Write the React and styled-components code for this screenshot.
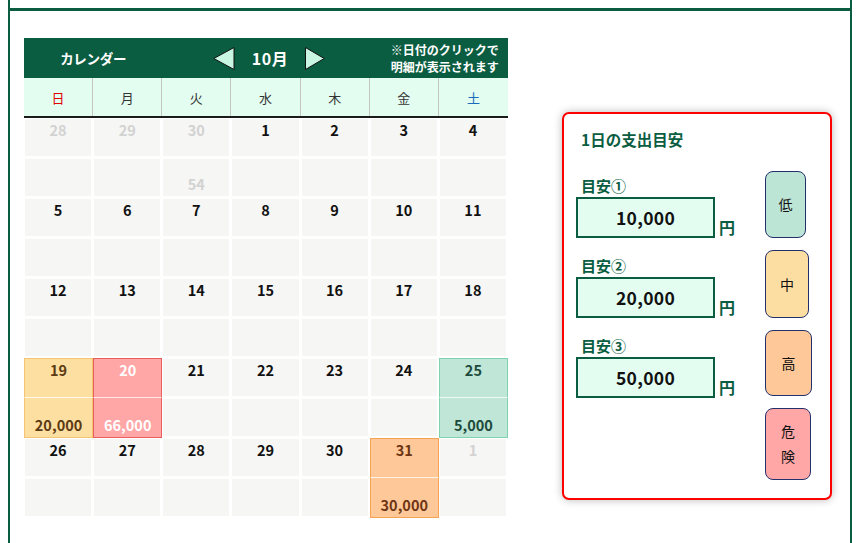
import React from "react";
import styled, { createGlobalStyle } from "styled-components";

const GREEN = "#0b5d41";
const MINT = "#e3fdf1";

const GlobalStyle = createGlobalStyle`
  html, body {
    margin: 0;
    padding: 0;
    background: #fff;
  }
  body {
    margin: 0 10px 0 8px;
    font-family: "Noto Sans CJK JP", "Noto Sans", sans-serif;
    color: #111;
  }
`;

const TONES = {
  plain: { bg: "#f6f6f4", border: null, date: "#111", amount: "#111" },
  out: { bg: "#f6f6f4", border: null, date: "#d2d2d2", amount: "#d2d2d2" },
  yellow: { bg: "#fddfa2", border: "#f4c470", date: "#5c3a12", amount: "#5c3a12" },
  red: { bg: "#ffa6a6", border: "#ec5d5d", date: "#fff", amount: "#fff" },
  green: { bg: "#bfe6d6", border: "#7ed2ae", date: "#1d4a3b", amount: "#1d4a3b" },
  peach: { bg: "#ffc898", border: "#f6a254", date: "#6e3614", amount: "#6e3614" },
};

const weeks = [
  [
    { d: 28, t: "out" },
    { d: 29, t: "out" },
    { d: 30, t: "out", a: "54" },
    { d: 1 },
    { d: 2 },
    { d: 3 },
    { d: 4 },
  ],
  [{ d: 5 }, { d: 6 }, { d: 7 }, { d: 8 }, { d: 9 }, { d: 10 }, { d: 11 }],
  [{ d: 12 }, { d: 13 }, { d: 14 }, { d: 15 }, { d: 16 }, { d: 17 }, { d: 18 }],
  [
    { d: 19, t: "yellow", a: "20,000" },
    { d: 20, t: "red", a: "66,000" },
    { d: 21 },
    { d: 22 },
    { d: 23 },
    { d: 24 },
    { d: 25, t: "green", a: "5,000" },
  ],
  [
    { d: 26 },
    { d: 27 },
    { d: 28 },
    { d: 29 },
    { d: 30 },
    { d: 31, t: "peach", a: "30,000" },
    { d: 1, t: "out" },
  ],
];

const weekdays = [
  { l: "日", c: "#e00000" },
  { l: "月" },
  { l: "火" },
  { l: "水" },
  { l: "木" },
  { l: "金" },
  { l: "土", c: "#1a6cba" },
];

const limits = [
  { label: "目安①", value: "10,000" },
  { label: "目安②", value: "20,000" },
  { label: "目安③", value: "50,000" },
];

const levels = [
  { text: "低", bg: "#bde5d5", w: 41, h: 67 },
  { text: "中", bg: "#fddea2", w: 44, h: 68 },
  { text: "高", bg: "#ffc898", w: 47, h: 66 },
  { text: "危\n険", bg: "#ffa6a6", w: 46, h: 72 },
];

function LeftArrow() {
  return (
    <svg width="22" height="23" viewBox="0 0 22 23">
      <polygon points="21,0.5 0.8,11.5 21,22.5" fill="#c9f6e3" stroke="#111" strokeWidth="1" />
    </svg>
  );
}

function RightArrow() {
  return (
    <svg width="20" height="23" viewBox="0 0 20 23">
      <polygon points="0.5,0.5 19.2,11.5 0.5,22.5" fill="#c9f6e3" stroke="#111" strokeWidth="1" />
    </svg>
  );
}

export default function App() {
  return (
    <>
      <GlobalStyle />
      <TopFrame />
      <Section>
        <Calendar>
          <CalHeader>
            <CalTitle>カレンダー</CalTitle>
            <MonthNav>
              <LeftArrow />
              <MonthLabel>10月</MonthLabel>
              <RightArrow />
            </MonthNav>
            <CalNote>
              ※日付のクリックで
              <br />
              明細が表示されます
            </CalNote>
          </CalHeader>

          <WeekdayRow>
            {weekdays.map((w) => (
              <Weekday key={w.l} $color={w.c}>
                {w.l}
              </Weekday>
            ))}
          </WeekdayRow>

          <DayGrid>
            {weeks.flat().map((day, i) => {
              const tone = TONES[day.t || "plain"];
              return (
                <DayCell key={i}>
                  <DateSlot $tone={tone}>{day.d}</DateSlot>
                  <AmountSlot $tone={tone}>{day.a}</AmountSlot>
                </DayCell>
              );
            })}
          </DayGrid>
        </Calendar>

        <Panel>
          <PanelTitle>1日の支出目安</PanelTitle>
          <PanelBody>
            <LimitList>
              {limits.map((l) => (
                <LimitGroup key={l.label}>
                  <LimitLabel>{l.label}</LimitLabel>
                  <LimitRow>
                    <LimitInput>{l.value}</LimitInput>
                    <Yen>円</Yen>
                  </LimitRow>
                </LimitGroup>
              ))}
            </LimitList>
            <LevelList>
              {levels.map((lv) => (
                <LevelButton key={lv.text} $bg={lv.bg} $w={lv.w} $h={lv.h}>
                  {lv.text}
                </LevelButton>
              ))}
            </LevelList>
          </PanelBody>
        </Panel>
      </Section>
    </>
  );
}

const TopFrame = styled.div`
  height: 8px;
  border: 2px solid ${GREEN};
  border-top: none;
  border-bottom-width: 3px;
`;

const Section = styled.div`
  display: flex;
  align-items: flex-start;
  min-height: 532px;
  box-sizing: border-box;
  padding: 27px 0 0 14px;
  border-left: 2px solid ${GREEN};
  border-right: 2px solid ${GREEN};
`;

const Calendar = styled.div`
  width: 484px;
  flex: none;
`;

const CalHeader = styled.div`
  display: grid;
  grid-template-columns: repeat(7, 1fr);
  align-items: center;
  height: 40px;
  background: ${GREEN};
  color: #fff;
  font-weight: 700;
`;

const CalTitle = styled.div`
  grid-column: span 2;
  text-align: center;
  font-size: 13.5px;
  letter-spacing: -0.3px;
`;

const MonthNav = styled.div`
  grid-column: span 3;
  display: flex;
  align-items: center;
  justify-content: center;
  gap: 17px;
  padding-left: 6px;

  svg {
    display: block;
  }
`;

const MonthLabel = styled.span`
  font-size: 16px;
  letter-spacing: 0.5px;
`;

const CalNote = styled.div`
  grid-column: span 2;
  padding-left: 21px;
  font-size: 12px;
  line-height: 17px;
  white-space: nowrap;
`;

const WeekdayRow = styled.div`
  display: grid;
  grid-template-columns: repeat(7, 1fr);
  height: 40px;
  box-sizing: border-box;
  background: ${MINT};
  border-bottom: 2px solid #1b1b1b;
`;

const Weekday = styled.div`
  display: flex;
  align-items: center;
  justify-content: center;
  font-size: 13px;
  color: ${(p) => p.$color || "#333"};
  border-right: 1px solid #c4c4c4;

  &:last-child {
    border-right: none;
  }
`;

const DayGrid = styled.div`
  display: grid;
  grid-template-columns: repeat(7, 1fr);
`;

const DayCell = styled.div`
  display: flex;
  flex-direction: column;
  font-family: "Noto Sans CJK JP", "Liberation Sans", sans-serif;
  font-weight: 700;
`;

const Slot = styled.div`
  height: 40px;
  box-sizing: border-box;
  display: flex;
  justify-content: center;
  background: ${(p) => p.$tone.bg};
  ${(p) =>
    p.$tone.border
      ? `border: 1px solid ${p.$tone.border};`
      : `border-style: solid; border-color: #fff; border-width: 1px 2px 2px 1px;`}
`;

const DateSlot = styled(Slot)`
  align-items: flex-start;
  padding-top: 1px;
  font-size: 14.5px;
  line-height: 20px;
  color: ${(p) => p.$tone.date};
  ${(p) => p.$tone.border && `border-bottom: 1px solid rgba(255,255,255,0.75);`}
`;

const AmountSlot = styled(Slot)`
  align-items: flex-end;
  padding-bottom: 2px;
  font-size: 14.5px;
  line-height: 20px;
  color: ${(p) => p.$tone.amount};
  ${(p) => p.$tone.border && `border-top: none;`}
`;

const Panel = styled.div`
  flex: none;
  width: 270px;
  height: 388px;
  box-sizing: border-box;
  margin: 74px 0 0 54px;
  padding: 15px 0 0 12px;
  border: 2px solid #ff0000;
  border-radius: 7px;
  box-shadow: 0 0 8px rgba(0, 0, 0, 0.28);
  background: #fff;
`;

const PanelTitle = styled.div`
  padding-left: 5px;
  font-size: 15.5px;
  line-height: 20px;
  font-weight: 700;
  color: ${GREEN};
  margin-bottom: 22px;
`;

const PanelBody = styled.div`
  display: flex;
  align-items: flex-start;
`;

const LimitList = styled.div`
  display: flex;
  flex-direction: column;
  gap: 18px;
  padding-top: 5px;
  width: 159px;
`;

const LimitGroup = styled.div`
  display: flex;
  flex-direction: column;
  gap: 1px;
`;

const LimitLabel = styled.div`
  padding-left: 5px;
  font-size: 15px;
  line-height: 20px;
  font-weight: 700;
  color: ${GREEN};
`;

const LimitRow = styled.div`
  display: flex;
  align-items: flex-end;
  gap: 4px;
`;

const LimitInput = styled.div`
  width: 139px;
  height: 41px;
  box-sizing: border-box;
  display: flex;
  align-items: center;
  justify-content: center;
  background: ${MINT};
  border: 2px solid ${GREEN};
  font-size: 17.5px;
  font-weight: 700;
  color: #111;
  letter-spacing: 0.3px;
`;

const Yen = styled.span`
  font-size: 16px;
  line-height: 20px;
  font-weight: 700;
  color: ${GREEN};
  margin-bottom: 1px;
`;

const LevelList = styled.div`
  display: flex;
  flex-direction: column;
  align-items: flex-start;
  gap: 12px;
  margin-left: 30px;
`;

const LevelButton = styled.div`
  width: ${(p) => p.$w}px;
  height: ${(p) => p.$h}px;
  box-sizing: border-box;
  display: flex;
  align-items: center;
  justify-content: center;
  text-align: center;
  white-space: pre-line;
  background: ${(p) => p.$bg};
  border: 1px solid #22306c;
  border-radius: 8px;
  font-size: 14px;
  line-height: 25px;
  color: #111;
`;
